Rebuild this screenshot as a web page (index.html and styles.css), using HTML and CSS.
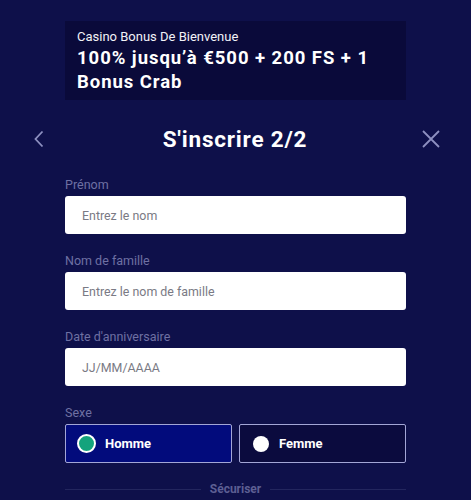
FILE: index.html
```html
<!DOCTYPE html>
<html lang="fr">
<head>
<meta charset="utf-8">
<title>S'inscrire 2/2</title>
<link rel="stylesheet" href="styles.css">
</head>
<body>
<div class="page">
  <div class="bonus">
    <div class="bonus-sub">Casino Bonus De Bienvenue</div>
    <div class="bonus-title">100% jusqu’à €500 + 200 FS + 1 Bonus Crab</div>
  </div>
  <div class="header">
    <button class="icon-btn back" aria-label="Retour">
      <svg width="12" height="18" viewBox="0 0 12 18"><path d="M9.5 1.5 L2.5 9 L9.5 16.5" fill="none" stroke="#8d90c0" stroke-width="1.8"/></svg>
    </button>
    <h1 class="title">S'inscrire 2/2</h1>
    <button class="icon-btn close" aria-label="Fermer">
      <svg width="20" height="20" viewBox="0 0 20 20"><path d="M2 2 L18 18 M18 2 L2 18" fill="none" stroke="#8d90c0" stroke-width="1.8"/></svg>
    </button>
  </div>
  <form class="form">
    <label class="field">
      <span class="label">Prénom</span>
      <input class="input" type="text" placeholder="Entrez le nom">
    </label>
    <label class="field">
      <span class="label">Nom de famille</span>
      <input class="input" type="text" placeholder="Entrez le nom de famille">
    </label>
    <label class="field">
      <span class="label">Date d'anniversaire</span>
      <input class="input" type="text" placeholder="JJ/MM/AAAA">
    </label>
    <div class="field">
      <span class="label">Sexe</span>
      <div class="radios">
        <div class="radio selected"><span class="dot"></span><span class="radio-text">Homme</span></div>
        <div class="radio"><span class="dot"></span><span class="radio-text">Femme</span></div>
      </div>
    </div>
    <div class="divider"><span class="line"></span><span class="divider-text">Sécuriser</span><span class="line"></span></div>
  </form>
</div>
</body>
</html>
```
FILE: styles.css
```css
* { box-sizing: border-box; }
html, body { margin: 0; padding: 0; }
body {
  background: #0e104a;
  font-family: Roboto, "Liberation Sans", Arial, sans-serif;
  color: #fff;
  height: 500px;
  overflow: hidden;
}
.page {
  padding-top: 21px;
}
.bonus {
  width: 341px;
  margin: 0 auto;
  background: #0a0a3a;
  padding: 8px 12px 7px;
  height: 79px;
}
.bonus-sub {
  font-size: 13px;
  line-height: 16px;
  color: #f2f2f7;
}
.bonus-title {
  font-size: 18.5px;
  font-weight: 700;
  line-height: 24px;
  margin-top: 1px;
  letter-spacing: 0.95px;
}
.header {
  display: flex;
  align-items: center;
  justify-content: space-between;
  padding: 0 30px 0 33px;
  margin-top: 24px;
  height: 30px;
}
.icon-btn {
  background: none;
  border: 0;
  padding: 0;
  display: flex;
  align-items: center;
  cursor: pointer;
}
.title {
  margin: 0;
  font-size: 22.5px;
  font-weight: 700;
  line-height: 30px;
  letter-spacing: 0.8px;
  color: #fff;
  position: relative;
  left: 2px;
}
.form {
  width: 341px;
  margin: 23px auto 0;
  display: flex;
  flex-direction: column;
  gap: 19px;
}
.field {
  display: flex;
  flex-direction: column;
  gap: 4px;
}
.label {
  font-size: 12.5px;
  line-height: 15px;
  color: #6f71a3;
}
.input {
  height: 38px;
  border: 0;
  border-radius: 3px;
  background: #fff;
  padding: 0 17px;
  font-family: inherit;
  font-size: 12.4px;
  color: #333;
  outline: none;
}
.input::placeholder { color: #7a7a84; }
.radios {
  display: flex;
  gap: 7px;
}
.radio {
  flex: 1;
  height: 39px;
  border: 1px solid #a3a6d6;
  border-radius: 2px;
  background: #0b0b3e;
  display: flex;
  align-items: center;
  padding-left: 13px;
  gap: 10px;
}
.radio.selected {
  background: #020b7c;
}
.dot {
  width: 16px;
  height: 16px;
  border-radius: 50%;
  background: #fff;
}
.selected .dot {
  width: 19px;
  height: 19px;
  margin-left: -2px;
  background: #14a37c;
  border: 2px solid #fff;
}
.radio-text {
  font-size: 13px;
  font-weight: 700;
  color: #fff;
}
.selected .radio-text { margin-left: -1px; }
.divider {
  display: flex;
  align-items: center;
  gap: 9px;
  margin-top: 0;
}
.line {
  flex: 1;
  height: 1px;
  background: #23265e;
}
.divider-text {
  font-size: 12px;
  font-weight: 700;
  color: #5d5f93;
}
```
